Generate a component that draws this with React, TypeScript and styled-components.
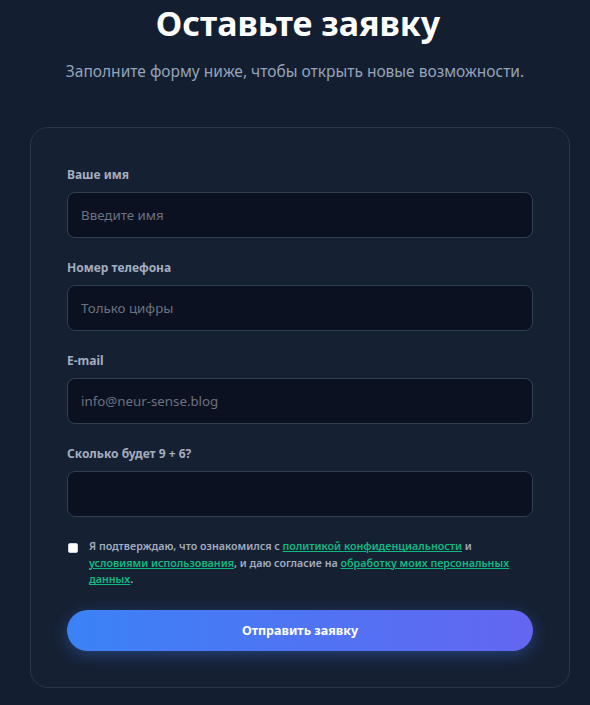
import React from "react";
import styled, { createGlobalStyle } from "styled-components";

const Global = createGlobalStyle`
  html, body { margin: 0; padding: 0; background: #141e31; }
  body { font-family: "Noto Sans", "Open Sans", sans-serif; }
  * { box-sizing: border-box; }
`;

const Page = styled.div`
  min-height: 705px;
  background: #141e31;
  padding: 1px 20px 0 30px;
  display: flex;
  flex-direction: column;
  align-items: stretch;
`;

const Title = styled.h1`
  margin: 0;
  text-align: center;
  color: #ffffff;
  font-size: 34px;
  line-height: 44px;
  font-weight: 700;
  padding-right: 4px;
`;

const Subtitle = styled.p`
  margin: 15px 0 0;
  text-align: center;
  color: #94a3b8;
  font-size: 15.5px;
  line-height: 22px;
  padding-right: 10px;
`;

const Card = styled.form`
  margin-top: 45px;
  width: 540px;
  border: 1px solid #2b3649;
  border-radius: 18px;
  background: #162033;
  padding: 38px 36px 36px;
  display: flex;
  flex-direction: column;
`;

const Field = styled.div`
  display: flex;
  flex-direction: column;
  gap: 8px;
  margin-bottom: 21px;
`;

const Label = styled.label`
  color: #a3adbf;
  font-size: 12px;
  line-height: 18px;
  font-weight: 700;
`;

const Input = styled.input`
  height: 46px;
  width: 100%;
  background: #0b1120;
  border: 1px solid #323e52;
  border-radius: 8px;
  padding: 0 13px;
  color: #e2e8f0;
  font-family: inherit;
  font-size: 13.3px;
  outline: none;
  &::placeholder { color: #6b7280; }
`;

const Consent = styled.div`
  display: flex;
  align-items: flex-start;
  gap: 11px;
`;

const Check = styled.input`
  margin: 5px 0 0 1px;
  width: 10px;
  height: 10px;
  flex: none;
  appearance: none;
  background: #ffffff;
  border: 1px solid #cbd5e1;
  border-radius: 2px;
`;

const ConsentText = styled.p`
  margin: 0;
  color: #a3adbf;
  font-size: 10.7px;
  line-height: 16.5px;
  font-weight: 600;
`;

const Link = styled.a`
  color: #10b981;
  text-decoration: underline;
`;

const Submit = styled.button`
  margin-top: 22px;
  height: 41px;
  width: 100%;
  border: none;
  border-radius: 21px;
  background: linear-gradient(90deg, #3b82f6 0%, #6366f1 100%);
  color: #ffffff;
  font-family: inherit;
  font-size: 12.5px;
  font-weight: 700;
  box-shadow: 0 4px 16px rgba(59, 130, 246, 0.35);
  cursor: pointer;
`;

export default function App() {
  return (
    <>
      <Global />
      <Page>
        <Title>Оставьте заявку</Title>
        <Subtitle>Заполните форму ниже, чтобы открыть новые возможности.</Subtitle>
        <Card onSubmit={(e) => e.preventDefault()}>
          <Field>
            <Label>Ваше имя</Label>
            <Input placeholder="Введите имя" />
          </Field>
          <Field>
            <Label>Номер телефона</Label>
            <Input placeholder="Только цифры" />
          </Field>
          <Field>
            <Label>E-mail</Label>
            <Input placeholder="info@neur-sense.blog" />
          </Field>
          <Field>
            <Label>Сколько будет 9 + 6?</Label>
            <Input />
          </Field>
          <Consent>
            <Check type="checkbox" />
            <ConsentText>
              Я подтверждаю, что ознакомился с <Link href="#">политикой конфиденциальности</Link> и{" "}
              <Link href="#">условиями использования</Link>, и даю согласие на{" "}
              <Link href="#">обработку моих персональных данных</Link>.
            </ConsentText>
          </Consent>
          <Submit type="submit">Отправить заявку</Submit>
        </Card>
      </Page>
    </>
  );
}
